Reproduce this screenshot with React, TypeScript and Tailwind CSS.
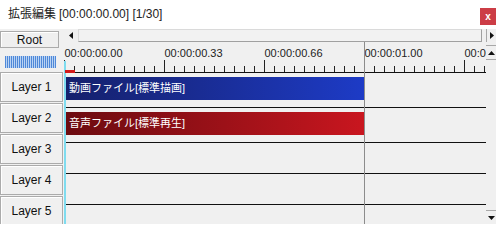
import React from 'react';

const layers = ['Layer 1', 'Layer 2', 'Layer 3', 'Layer 4', 'Layer 5'];
const labels = ['00:00:00.00', '00:00:00.33', '00:00:00.66', '00:00:01.00', '00:00:01.33'];

interface Clip {
  layer: number;
  name: string;
  tone: 'video' | 'audio';
}

const clips: Clip[] = [
  { layer: 0, name: '動画ファイル[標準描画]', tone: 'video' },
  { layer: 1, name: '音声ファイル[標準再生]', tone: 'audio' },
];

function Ticks() {
  const ticks = Array.from({ length: 43 }, (_, i) => i);
  return (
    <svg width="422" height="12" className="block">
      {ticks.map((i) => (
        <line
          key={i}
          x1={i * 10 + 0.5}
          x2={i * 10 + 0.5}
          y1={i % 10 === 0 ? 0 : 6}
          y2={12}
          stroke="#222"
          strokeWidth="1"
        />
      ))}
    </svg>
  );
}

function LayerButton({ label }: { label: string }) {
  return (
    <div className="mb-[1px] flex h-[30px] w-[63px] items-center justify-center border border-[#ababab] bg-[#f0f0f0] text-[12px] text-[#111] shadow-[inset_1px_1px_0_#ffffff]">
      {label}
    </div>
  );
}

export default function App() {
  return (
    <div className="relative h-[224px] w-[496px] overflow-hidden bg-[#f0f0f0] font-['Liberation_Sans','Noto_Sans_CJK_JP',sans-serif] text-[#111]">
      {/* title bar */}
      <div className="flex h-[29px] items-start justify-between bg-white">
        <div className="mt-[7px] flex items-baseline pl-[8px] text-[12px] leading-[15px] text-[#222]">
          <span>拡張編集</span>
          <span className="ml-[3px]">[00:00:00.00] [1/30]</span>
        </div>
        <div className="mt-[8px] flex h-[17px] w-[16px] items-center justify-center bg-[#cc3d46] text-[10px] font-bold leading-none text-white">
          x
        </div>
      </div>

      <div className="flex">
        {/* left column */}
        <div className="flex w-[64px] flex-col">
          <div className="mt-[2px] flex h-[17px] w-[59px] items-center justify-center border border-[#ababab] bg-[#efefef] text-[12px] shadow-[inset_1px_1px_0_#ffffff]">
            Root
          </div>
          <div className="ml-[5px] mt-[8px] h-[12px] w-[51px] bg-[repeating-linear-gradient(90deg,#4f88d8_0px,#4f88d8_1px,#b9d3f3_1px,#b9d3f3_2px)]" />
          <div className="mt-[4px]">
            {layers.map((l) => (
              <LayerButton key={l} label={l} />
            ))}
          </div>
        </div>

        {/* timeline */}
        <div className="flex w-[432px] flex-col">
          {/* horizontal scrollbar */}
          <div className="flex h-[13px]">
            <div className="flex w-[14px] items-center justify-center">
              <svg width="4" height="7">
                <polygon points="4,0 4,7 0,3.5" fill="#111" />
              </svg>
            </div>
            <div className="w-[404px] border border-[#dadada] border-b-[#a0a0a0] border-r-[#a0a0a0] bg-[#f2f2f2]" />
            <div className="flex-1" />
            <div className="flex w-[10px] items-center justify-center border-l border-[#a8a8a8]">
              <svg width="4" height="7">
                <polygon points="0,0 0,7 4,3.5" fill="#111" />
              </svg>
            </div>
          </div>

          <div className="flex">
            {/* tracks */}
            <div className="relative h-[182px] w-[422px] overflow-hidden">
              <div className="h-[31px] border-b border-[#111]">
                <div className="flex h-[18px] pt-[5px] text-[11px] leading-[12px] text-[#222]">
                  {labels.map((t) => (
                    <span key={t} className="w-[100px] shrink-0 whitespace-nowrap pl-[0.5px]">
                      {t}
                    </span>
                  ))}
                </div>
                <Ticks />
              </div>

              {layers.map((l, i) => {
                const clip = clips.find((c) => c.layer === i);
                return (
                  <div key={l} className="h-[31px] border-b border-[#111]">
                    {clip && (
                      <div
                        className={
                          clip.tone === 'video'
                            ? 'ml-[1px] mt-[4px] flex h-[23px] w-[299px] items-center bg-linear-to-r from-[#15206c] to-[#1d3bc6] pl-[4px] text-[11px] text-white'
                            : 'ml-[1px] mt-[4px] flex h-[23px] w-[299px] items-center bg-linear-to-r from-[#6c0b10] to-[#c9161f] pl-[4px] text-[11px] text-white'
                        }
                      >
                        {clip.name}
                      </div>
                    )}
                  </div>
                );
              })}

              {/* cursor, range and end markers */}
              <div className="absolute bottom-0 left-0 top-[19px] w-[2px] bg-[#7fdcef]" />
              <div className="absolute left-[1px] top-[28px] h-[3px] w-[10px] bg-[#d21a1a]" />
              <div className="absolute bottom-0 left-[300px] top-0 w-px bg-[#8c8c8c]" />
            </div>

            {/* vertical scrollbar */}
            <div className="flex h-[182px] w-[10px] flex-col">
              <div className="mt-[3px] flex h-[15px] items-center justify-center border-y border-[#a8a8a8]">
                <svg width="7" height="4">
                  <polygon points="0,4 7,4 3.5,0" fill="#111" />
                </svg>
              </div>
              <div className="flex-1" />
              <div className="flex h-[14px] items-center justify-center border-t border-[#a8a8a8]">
                <svg width="7" height="4">
                  <polygon points="0,0 7,0 3.5,4" fill="#111" />
                </svg>
              </div>
            </div>
          </div>
        </div>
      </div>
    </div>
  );
}
